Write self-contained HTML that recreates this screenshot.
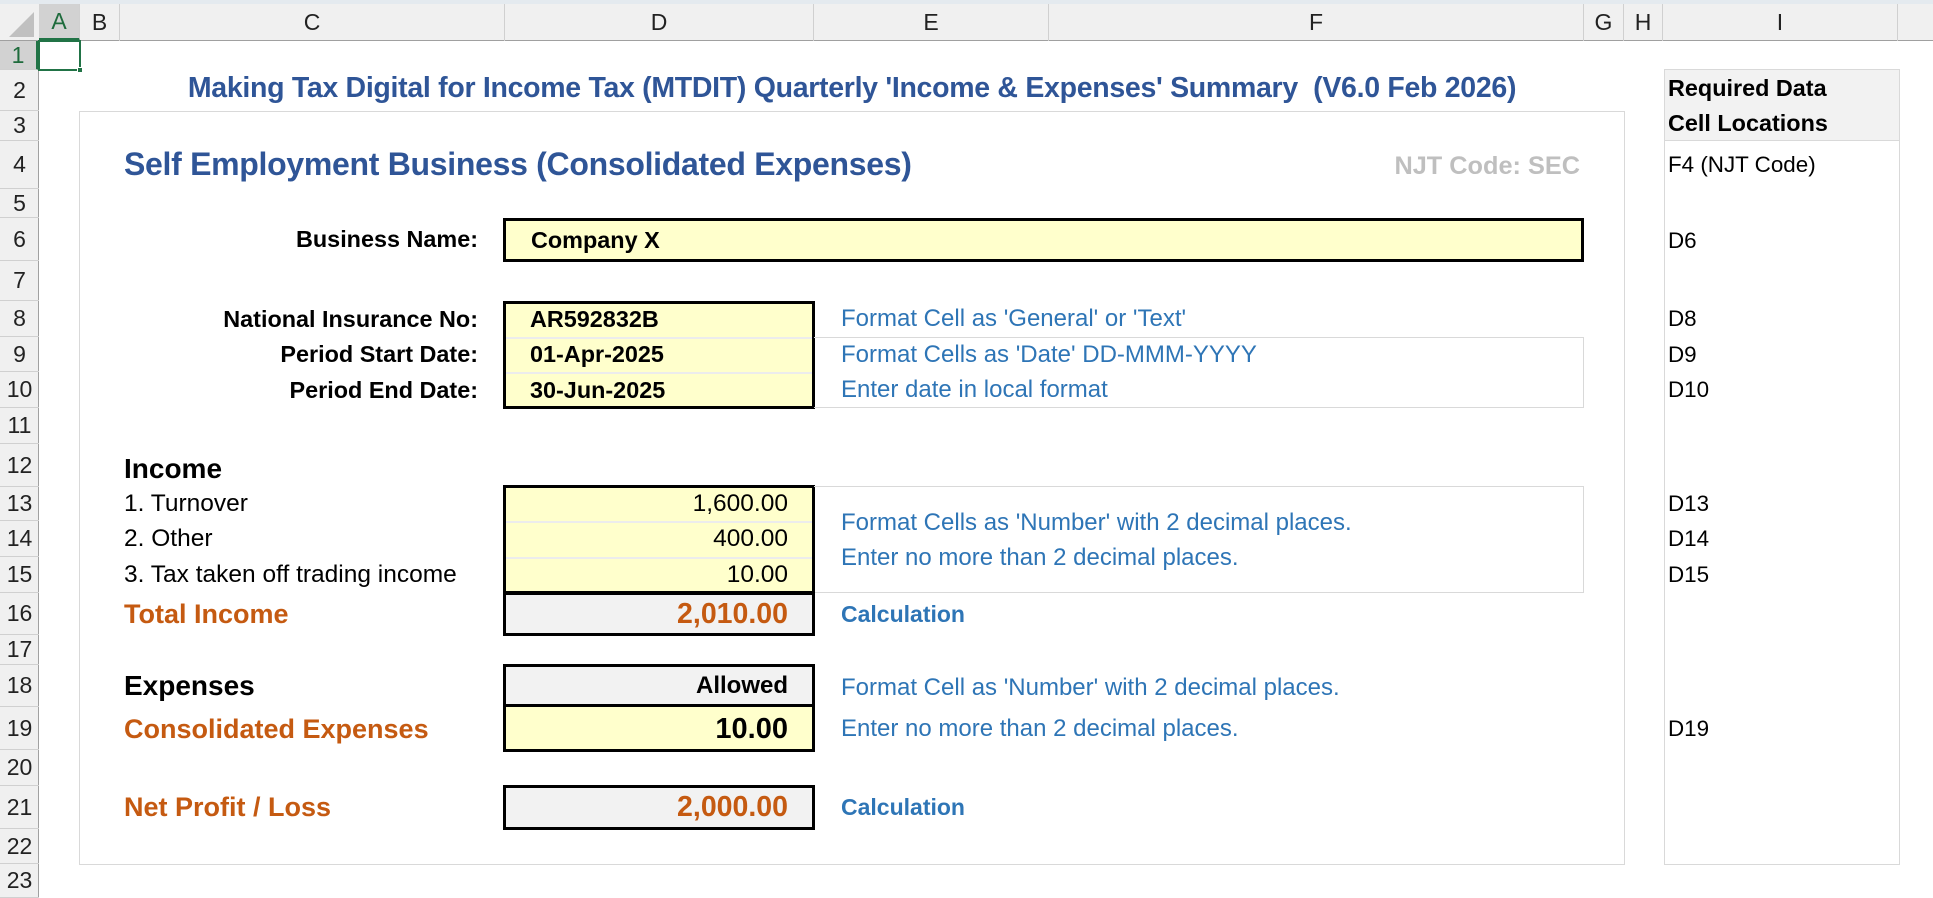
<!DOCTYPE html>
<html><head><meta charset="utf-8"><style>
*{margin:0;padding:0;box-sizing:border-box}
body{width:1933px;height:898px;overflow:hidden;background:#fff;font-family:"Liberation Sans",sans-serif;position:relative}
.a{position:absolute;white-space:nowrap}
.t{position:absolute;white-space:nowrap;display:flex;align-items:center}
.r{justify-content:flex-end}
.hdr{background:#f0f0f0}
.rn{position:absolute;left:0;width:39px;font-size:23px;color:#222;display:flex;align-items:center;justify-content:center;border-bottom:1px solid #d0d0d0}
.cl{position:absolute;top:4px;height:37px;font-size:23px;color:#222;display:flex;align-items:center;justify-content:center;border-right:1px solid #d0d0d0}
.lbl{font-size:23.4px;font-weight:bold;color:#000}
.nrm{font-size:24.5px;color:#000}
.hint{font-size:24px;color:#2e75b6}
.calc{font-size:23px;font-weight:bold;color:#2e75b6}
.or{font-size:27px;font-weight:bold;color:#c55a11}
.ci{font-size:22.4px;color:#000}
</style></head><body>
<div class="a" style="left:0;top:0;width:1933px;height:4px;background:#e4eaef"></div>
<div class="a hdr" style="left:0;top:4px;width:1933px;height:37px;border-bottom:1px solid #a0a0a0"></div>
<div class="a hdr" style="left:0;top:41px;width:39px;height:857px;border-right:1px solid #a0a0a0"></div>
<svg class="a" style="left:6px;top:10px" width="30" height="28"><polygon points="28,2 28,27 3,27" fill="#c0c0c0"/></svg>
<div class="cl" style="left:39px;width:41px;background:#d2d2d2;color:#1e6b3c;border-bottom:3px solid #217346">A</div>
<div class="cl" style="left:80px;width:40px">B</div>
<div class="cl" style="left:120px;width:385px">C</div>
<div class="cl" style="left:505px;width:309px">D</div>
<div class="cl" style="left:814px;width:235px">E</div>
<div class="cl" style="left:1049px;width:535px">F</div>
<div class="cl" style="left:1584px;width:40px">G</div>
<div class="cl" style="left:1624px;width:39px">H</div>
<div class="cl" style="left:1663px;width:235px">I</div>
<div class="rn" style="top:41px;height:29px;background:#d2d2d2;color:#1e6b3c;border-right:3px solid #217346">1</div>
<div class="rn" style="top:70px;height:41px">2</div>
<div class="rn" style="top:111px;height:30px">3</div>
<div class="rn" style="top:141px;height:48px">4</div>
<div class="rn" style="top:189px;height:29px">5</div>
<div class="rn" style="top:218px;height:43px">6</div>
<div class="rn" style="top:261px;height:40px">7</div>
<div class="rn" style="top:301px;height:36px">8</div>
<div class="rn" style="top:337px;height:35px">9</div>
<div class="rn" style="top:372px;height:36px">10</div>
<div class="rn" style="top:408px;height:36px">11</div>
<div class="rn" style="top:444px;height:43px">12</div>
<div class="rn" style="top:487px;height:34px">13</div>
<div class="rn" style="top:521px;height:36px">14</div>
<div class="rn" style="top:557px;height:36px">15</div>
<div class="rn" style="top:593px;height:42px">16</div>
<div class="rn" style="top:635px;height:30px">17</div>
<div class="rn" style="top:665px;height:42px">18</div>
<div class="rn" style="top:707px;height:43px">19</div>
<div class="rn" style="top:750px;height:36px">20</div>
<div class="rn" style="top:786px;height:43px">21</div>
<div class="rn" style="top:829px;height:35px">22</div>
<div class="rn" style="top:864px;height:34px">23</div>
<div class="a" style="left:38px;top:40px;width:43px;height:31px;border:2px solid #217346"></div>
<div class="a" style="left:77px;top:67px;width:6px;height:6px;background:#217346;border:1px solid #fff"></div>

<div class="a" style="left:120px;top:72px;width:1464px;text-align:center;font-size:28.5px;font-weight:bold;color:#2f5597;letter-spacing:-0.3px">Making Tax Digital for Income Tax (MTDIT) Quarterly 'Income &amp; Expenses' Summary&nbsp; (V6.0 Feb 2026)</div>
<div class="a" style="left:79px;top:111px;width:1546px;height:754px;border:1px solid #d9d9d9"></div>
<div class="a" style="left:124px;top:146px;font-size:32px;font-weight:bold;color:#2f5597;letter-spacing:-0.3px">Self Employment Business (Consolidated Expenses)</div>
<div class="a" style="left:1280px;width:300px;text-align:right;top:152px;font-size:25.3px;font-weight:bold;color:#bfbfbf">NJT Code: SEC</div>

<div class="t r lbl" style="left:120px;width:358px;top:218px;height:43px">Business Name:</div>
<div class="t lbl" style="left:503px;top:218px;width:1081px;height:44px;background:#ffffcc;border:3px solid #000;padding-left:25px">Company X</div>

<div class="t r lbl" style="left:120px;width:358px;top:301px;height:36px">National Insurance No:</div>
<div class="t r lbl" style="left:120px;width:358px;top:337px;height:35px">Period Start Date:</div>
<div class="t r lbl" style="left:120px;width:358px;top:372px;height:36px">Period End Date:</div>
<div class="a" style="left:503px;top:301px;width:312px;height:108px;background:#ffffcc;border:3px solid #000"></div>
<div class="a" style="left:506px;top:337px;width:306px;height:2px;background:#ececec"></div>
<div class="a" style="left:506px;top:372px;width:306px;height:2px;background:#ececec"></div>
<div class="t lbl" style="left:530px;top:301px;height:36px">AR592832B</div>
<div class="t lbl" style="left:530px;top:337px;height:35px">01-Apr-2025</div>
<div class="t lbl" style="left:530px;top:372px;height:36px">30-Jun-2025</div>
<div class="a" style="left:814px;top:337px;width:770px;height:71px;border:1px solid #d9d9d9;border-left:none"></div>
<div class="t hint" style="left:841px;top:301px;height:36px">Format Cell as 'General' or 'Text'</div>
<div class="t hint" style="left:841px;top:337px;height:35px">Format Cells as 'Date' DD-MMM-YYYY</div>
<div class="t hint" style="left:841px;top:372px;height:36px">Enter date in local format</div>

<div class="t" style="left:124px;top:444px;height:43px;font-size:28px;font-weight:bold;color:#000;align-items:flex-end;padding-bottom:2px">Income</div>
<div class="t nrm" style="left:124px;top:487px;height:34px">1. Turnover</div>
<div class="t nrm" style="left:124px;top:521px;height:36px">2. Other</div>
<div class="t nrm" style="left:124px;top:557px;height:36px">3. Tax taken off trading income</div>
<div class="a" style="left:503px;top:485px;width:312px;height:109px;background:#ffffcc;border:3px solid #000"></div>
<div class="a" style="left:506px;top:521px;width:306px;height:2px;background:#ececec"></div>
<div class="a" style="left:506px;top:557px;width:306px;height:2px;background:#ececec"></div>
<div class="t r nrm" style="left:505px;width:283px;top:487px;height:34px">1,600.00</div>
<div class="t r nrm" style="left:505px;width:283px;top:521px;height:36px">400.00</div>
<div class="t r nrm" style="left:505px;width:283px;top:557px;height:36px">10.00</div>
<div class="a" style="left:814px;top:486px;width:770px;height:107px;border:1px solid #d9d9d9;border-left:none"></div>
<div class="t hint" style="left:841px;top:505px;height:36px">Format Cells as 'Number' with 2 decimal places.</div>
<div class="t hint" style="left:841px;top:540px;height:36px">Enter no more than 2 decimal places.</div>

<div class="t or" style="left:124px;top:593px;height:42px">Total Income</div>
<div class="t r or" style="left:503px;top:592px;width:312px;height:44px;background:#f2f2f2;border:3px solid #000;padding-right:24px;font-size:28.5px">2,010.00</div>
<div class="t calc" style="left:841px;top:593px;height:42px">Calculation</div>

<div class="t" style="left:124px;top:665px;height:42px;font-size:28px;font-weight:bold;color:#000">Expenses</div>
<div class="t or" style="left:124px;top:707px;height:44px">Consolidated Expenses</div>
<div class="a" style="left:503px;top:664px;width:312px;height:88px;border:3px solid #000;background:#ffffcc"></div>
<div class="a" style="left:506px;top:667px;width:306px;height:40px;background:#f2f2f2;border-bottom:3px solid #000"></div>
<div class="t r lbl" style="left:505px;width:283px;top:665px;height:42px;font-size:24px">Allowed</div>
<div class="t r" style="left:505px;width:283px;top:707px;height:44px;font-size:29px;font-weight:bold;color:#000">10.00</div>
<div class="t hint" style="left:841px;top:667px;height:42px">Format Cell as 'Number' with 2 decimal places.</div>
<div class="t hint" style="left:841px;top:708px;height:42px">Enter no more than 2 decimal places.</div>

<div class="t or" style="left:124px;top:786px;height:43px">Net Profit / Loss</div>
<div class="t r or" style="left:503px;top:785px;width:312px;height:45px;background:#f2f2f2;border:3px solid #000;padding-right:24px;font-size:28.5px">2,000.00</div>
<div class="t calc" style="left:841px;top:786px;height:43px">Calculation</div>

<div class="a" style="left:1664px;top:69px;width:236px;height:796px;border:1px solid #d9d9d9"></div>
<div class="a" style="left:1665px;top:70px;width:234px;height:71px;background:#f2f2f2;border-bottom:1px solid #d9d9d9"></div>
<div class="t lbl" style="left:1668px;top:70px;height:36px">Required Data</div>
<div class="t lbl" style="left:1668px;top:105px;height:36px">Cell Locations</div>
<div class="t ci" style="left:1668px;top:145px;height:40px">F4 (NJT Code)</div>
<div class="t ci" style="left:1668px;top:218px;height:45px">D6</div>
<div class="t ci" style="left:1668px;top:301px;height:36px">D8</div>
<div class="t ci" style="left:1668px;top:337px;height:35px">D9</div>
<div class="t ci" style="left:1668px;top:372px;height:36px">D10</div>
<div class="t ci" style="left:1668px;top:487px;height:34px">D13</div>
<div class="t ci" style="left:1668px;top:521px;height:36px">D14</div>
<div class="t ci" style="left:1668px;top:557px;height:36px">D15</div>
<div class="t ci" style="left:1668px;top:707px;height:44px">D19</div>
</body></html>
